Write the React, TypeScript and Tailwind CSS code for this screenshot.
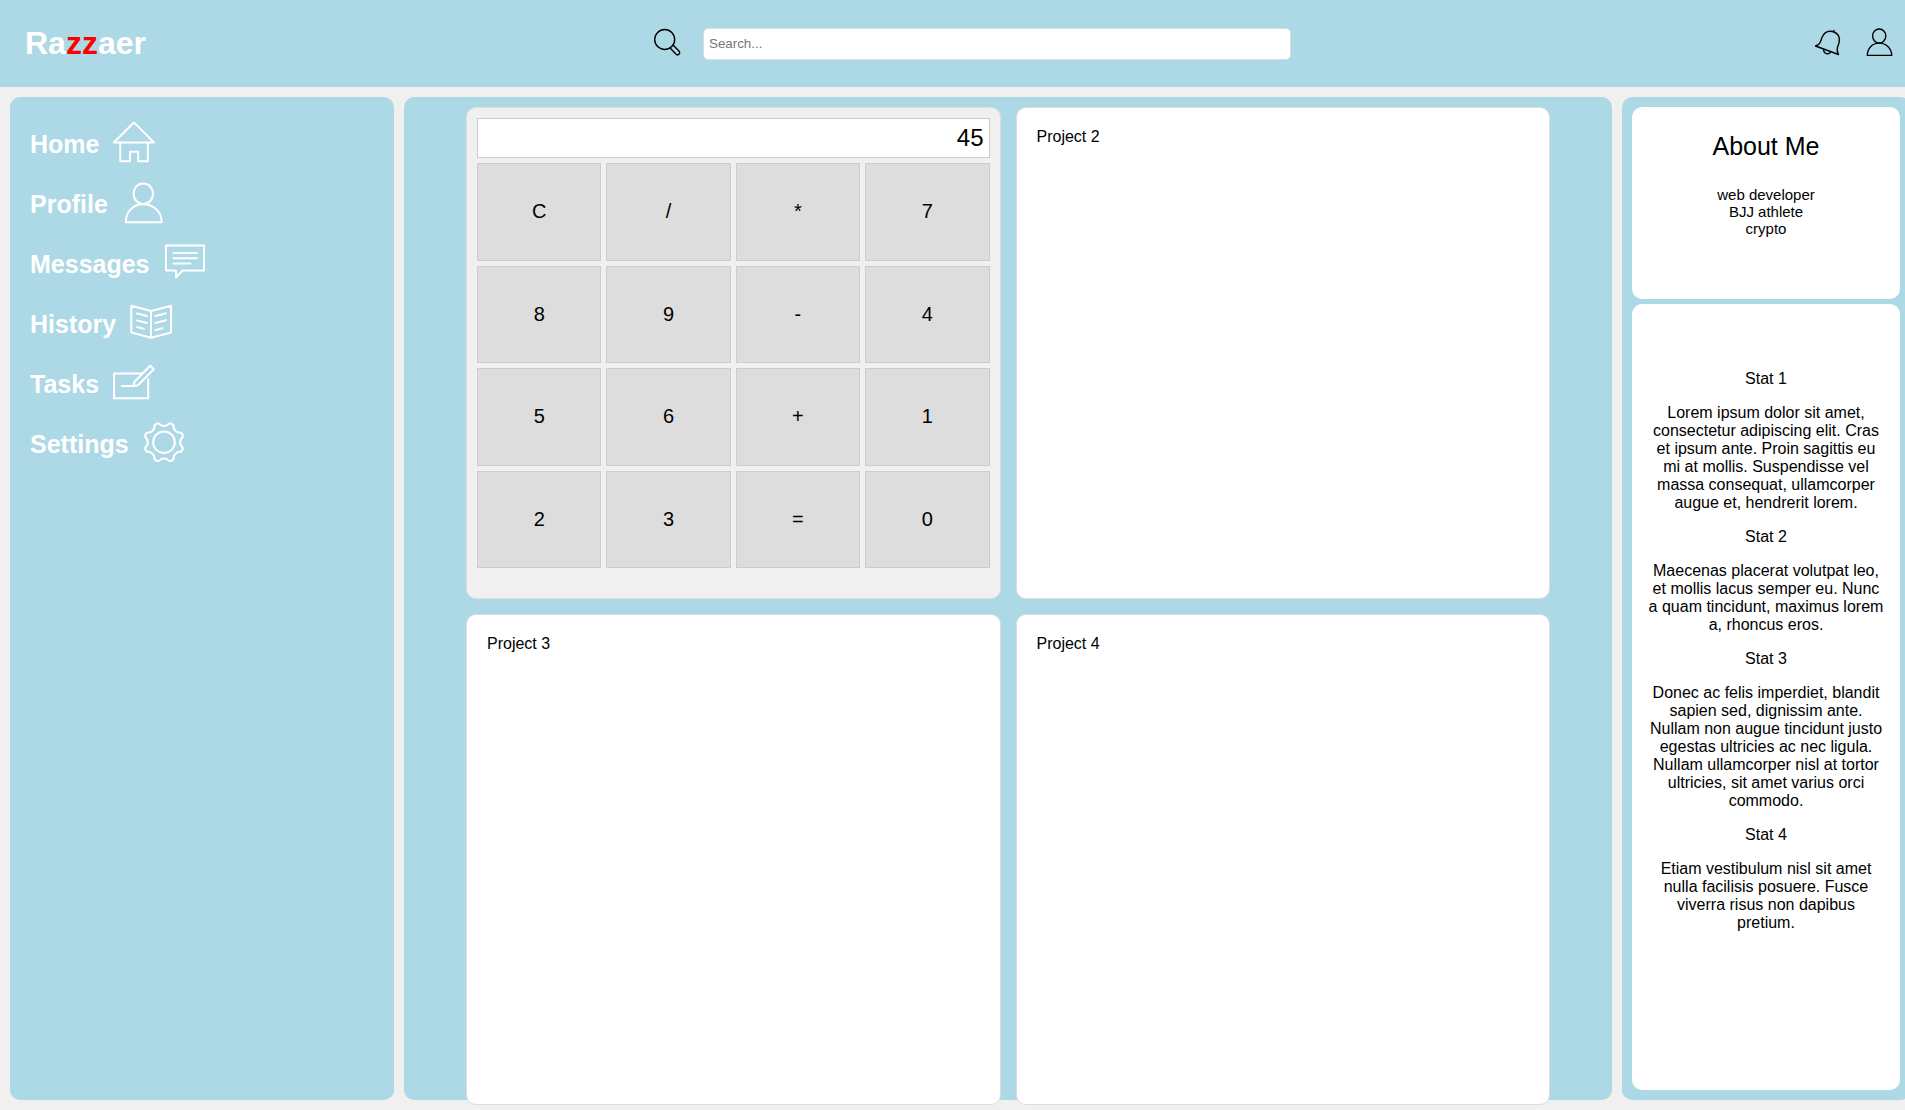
import React from 'react';

type IconProps = { children: React.ReactNode; className: string; box: string; weight?: number };

const Icon = ({ children, className, box, weight = 2 }: IconProps) => (
  <svg viewBox={box} className={`shrink-0 ${className}`} fill="none" stroke="currentColor" strokeWidth={weight} strokeLinejoin="round" strokeLinecap="round">
    {children}
  </svg>
);

const person = (
  <>
    <ellipse cx="25.3" cy="14.7" rx="9.7" ry="10.3" />
    <path d="M7.8 43.3C7.8 33 15 25.2 25.3 25.2S43.7 33 43.7 43.3Z" />
  </>
);

// Eight narrow teeth joined by concave valleys.
const gear = (() => {
  const at = (deg: number, r: number) => {
    const a = (deg * Math.PI) / 180;
    return `${(25 + r * Math.sin(a)).toFixed(2)} ${(23.2 - r * Math.cos(a)).toFixed(2)}`;
  };
  let d = `M${at(-15, 19.3)}`;
  for (let i = 0; i < 8; i++) {
    const c = i * 45;
    d += `Q${at(c - 9, 15.8)} ${at(c, 16.4)}Q${at(c + 9, 15.8)} ${at(c + 15, 19.3)}Q${at(c + 22.5, 20.9)} ${at(c + 30, 19.3)}`;
  }
  return `${d}Z`;
})();

const nav = [
  { label: 'Home', icon: <><path d="M4.8 23.5 25 3.5 45 23.5Z" /><path d="M11.3 23.5V42.3H21V32.8H29.2V42.3H38.8V23.5" /></> },
  { label: 'Profile', icon: person },
  { label: 'Messages', icon: <path d="M6 6.5H44V31.5H22.5L16 38.5V31.5H6ZM13.5 14H37M13.5 19.2H37M13.5 24.4H30.5" /> },
  { label: 'History', icon: <path d="M5.3 6.7 25 12 45 6.7V33.5L25 38.8 5.3 33.5ZM25 12V38.8M11 14.5 21 17M11 21.5 21 24M11 28 18 29.9M29.5 17 40 14.2M29.5 24 40 21.2M29.5 31 36.5 29.2" /> },
  { label: 'Tasks', icon: <><path d="M33 14.5H5V39.2H39.2V20M12.8 27H25" /><path d="M24.5 27 25.5 22.7 41.2 6.7 44.8 10.3 29 26.3Z" /></> },
  { label: 'Settings', icon: <><path d={gear} /><circle cx="25" cy="23.2" r="10.8" /></> },
];

const keys = ['C', '/', '*', '7', '8', '9', '-', '4', '5', '6', '+', '1', '2', '3', '=', '0'];

const stats = [
  'Lorem ipsum dolor sit amet, consectetur adipiscing elit. Cras et ipsum ante. Proin sagittis eu mi at mollis. Suspendisse vel massa consequat, ullamcorper augue et, hendrerit lorem.',
  'Maecenas placerat volutpat leo, et mollis lacus semper eu. Nunc a quam tincidunt, maximus lorem a, rhoncus eros.',
  'Donec ac felis imperdiet, blandit sapien sed, dignissim ante. Nullam non augue tincidunt justo egestas ultricies ac nec ligula. Nullam ullamcorper nisl at tortor ultricies, sit amet varius orci commodo.',
  'Etiam vestibulum nisl sit amet nulla facilisis posuere. Fusce viverra risus non dapibus pretium.',
];

const Header = () => (
  <header className="flex h-[87px] w-full items-center bg-[#add8e6]">
    <h1 className="ml-[25px] w-[625px] text-[32px] leading-[37px] font-bold text-white">
      Ra<span className="text-[red]">zz</span>aer
    </h1>
    <Icon box="0 0 34 34" className="-mt-px h-[34px] w-[34px] text-black" weight={1.4}>
      <circle cx="14.7" cy="13.5" r="10" />
      <path d="M20.1 22.1 26.1 28.2Q27.5 29.5 28.9 28.2T29.4 25.6L23.3 19.2" />
    </Icon>
    <input placeholder="Search..." className="ml-[19px] h-8 w-[588px] rounded-[5px] border border-[#ddd] bg-white px-[5px] text-[13.333px] text-black outline-none placeholder:text-[#757575]" />
    <div className="ml-[521px] flex items-center gap-5 text-black">
      <Icon box="0 0 30 30" className="-mt-[2px] h-[30px] w-[30px]" weight={1.4}>
        <path d="M3.5 18C8.5 16.5 8.5 13.5 10 9.5C12 4.5 16 2.5 20.5 3.5C26.5 5 28.5 10 27 15C25.5 19 24 21.5 26.5 26.5ZM21.5 3.7 22 2.5M11.5 21.5C12 27 18 26.5 18.5 23.5" />
      </Icon>
      <Icon box="0 0 50 50" className="-mt-px h-[34px] w-[34px]">{person}</Icon>
    </div>
  </header>
);

const Sidebar = () => (
  <nav className="w-96 shrink-0 rounded-[10px] bg-[#add8e6] pt-[17px] pl-5 text-white">
    {nav.map(({ label, icon }) => (
      <a key={label} className="flex h-[60px] items-center gap-[10px] text-[25px] leading-[29px] font-bold">
        <span>{label}</span>
        <Icon box="0 0 50 50" className="h-[50px] w-[50px]">{icon}</Icon>
      </a>
    ))}
  </nav>
);

const Calculator = () => (
  <section className="rounded-[10px] border border-[#ddd] bg-[#f0f0f0] p-[10px]">
    <div className="mb-[5px] flex h-10 items-center justify-end border border-[#ccc] bg-white px-[5px] text-2xl">45</div>
    <div className="grid h-[405px] grid-cols-4 grid-rows-4 gap-[5px]">
      {keys.map((key) => (
        <button key={key} className="border border-[#ccc] bg-[#ddd] text-xl leading-[23px]">{key}</button>
      ))}
    </div>
  </section>
);

const Project = ({ title }: { title: string }) => (
  <section className="rounded-[10px] border border-[#ddd] bg-white p-5 leading-[18px]">{title}</section>
);

export default function App() {
  return (
    <div className="h-[1110px] w-full overflow-hidden bg-[#f0f0f0] font-['Liberation_Sans',Arial,sans-serif] text-base text-black">
      <Header />
      <div className="flex h-[1023px] w-[1920px] gap-[10px] p-[10px]">
        <Sidebar />
        <main className="h-full w-[1208px] shrink-0 rounded-[10px] bg-[#add8e6] px-[62px] pt-[10px]">
          <div className="grid h-[998px] grid-cols-2 grid-rows-2 gap-[15px]">
            <Calculator />
            <Project title="Project 2" />
            <Project title="Project 3" />
            <Project title="Project 4" />
          </div>
        </main>
        <aside className="flex w-[288px] shrink-0 flex-col gap-[5px] rounded-[10px] bg-[#add8e6] p-[10px] text-center">
          <section className="h-48 shrink-0 rounded-[10px] bg-white pt-[25px]">
            <h2 className="text-[25px] leading-[29px]">About Me</h2>
            <p className="mt-[25px] text-[15px] leading-[17px]">web developer<br />BJJ athlete<br />crypto</p>
          </section>
          <section className="flex-1 rounded-[10px] bg-white px-[15px] pt-[66px] leading-[18px]">
            {stats.map((text, i) => (
              <div key={text} className="mb-4">
                <h3 className="mb-4">Stat {i + 1}</h3>
                <p>{text}</p>
              </div>
            ))}
          </section>
        </aside>
      </div>
    </div>
  );
}
